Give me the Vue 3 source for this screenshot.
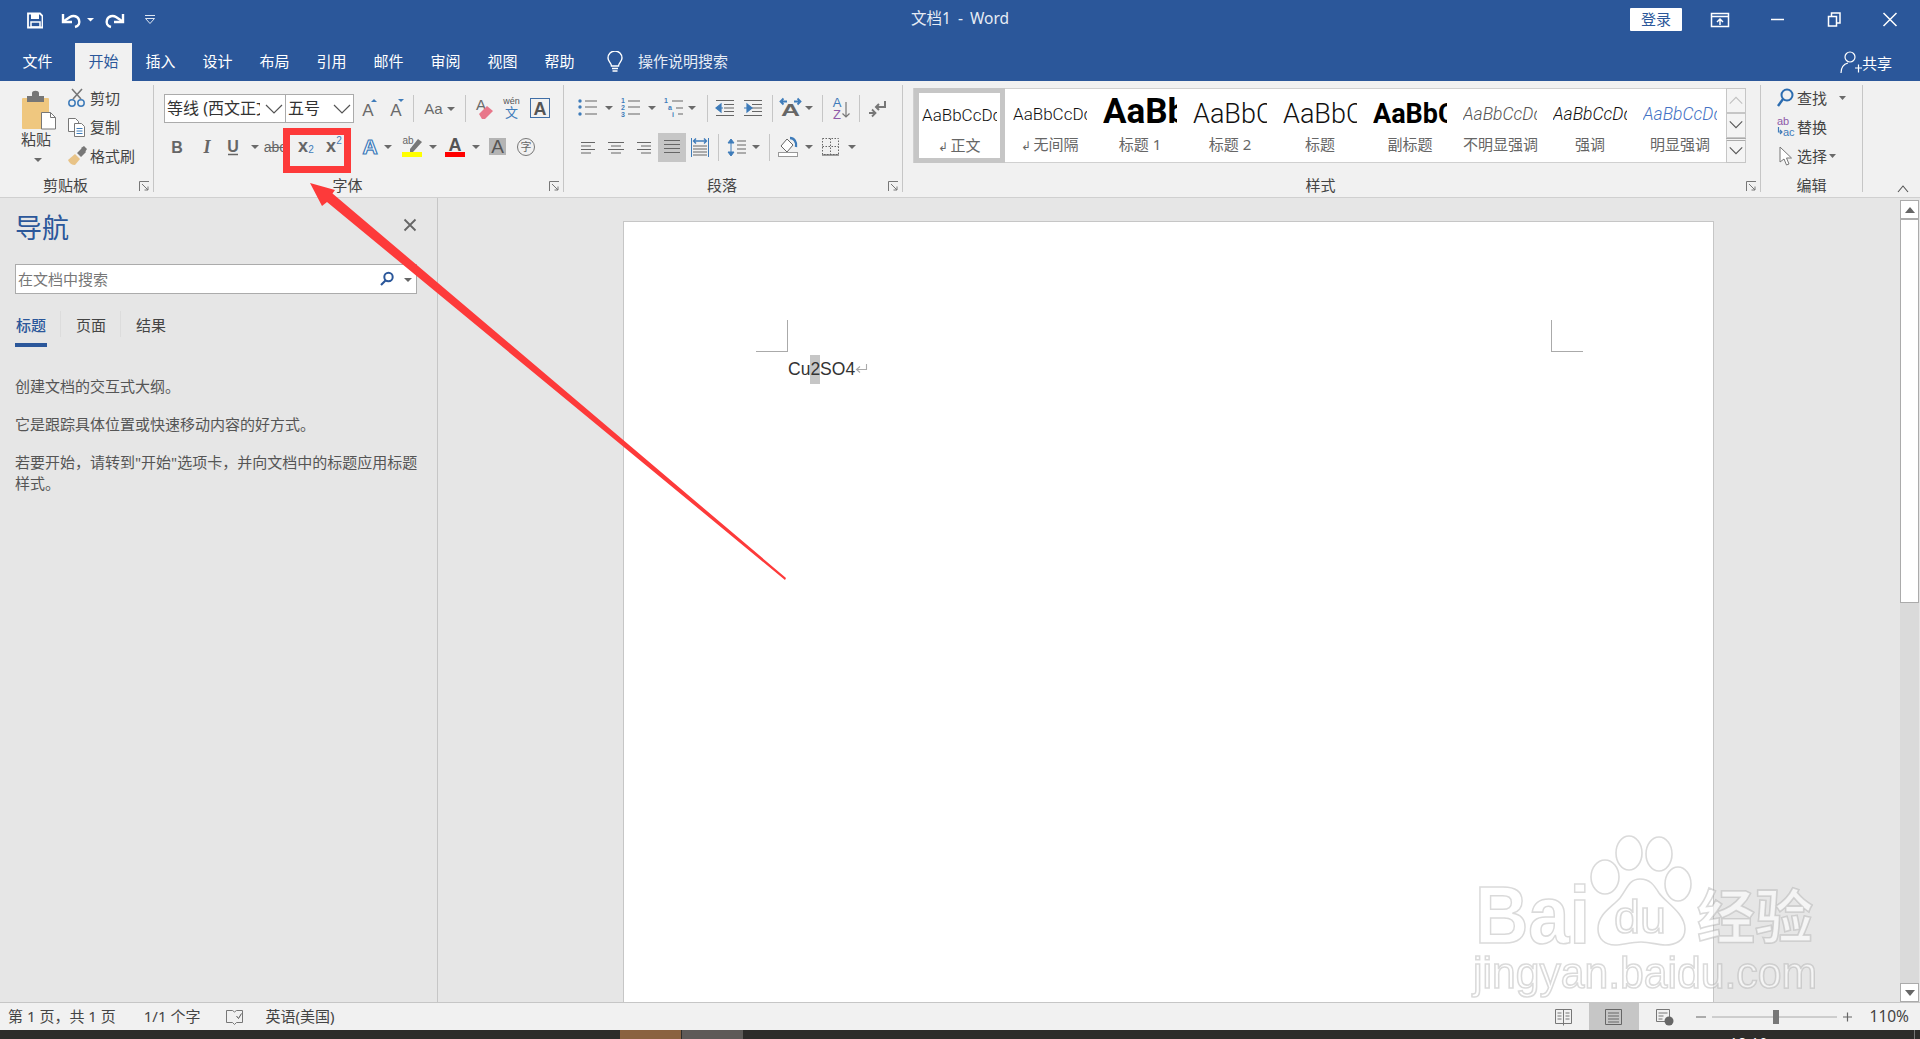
<template>
  <div class="app">
    <!-- title bar -->
    <header class="titlebar">
      <div class="qat">
        <svg width="43" height="38" viewBox="0 0 43 38">
          <path d="M28 13.5h12l2.5 2.5v11.5h-14.500z" fill="none" stroke="#fff" stroke-width="1.800" />
          <path d="M31 14v5h8v-5z" fill="#fff" />
          <path d="M31 27v-5h9v5z" fill="none" stroke="#fff" stroke-width="1.500" />
        </svg>
        <svg width="52" height="38" viewBox="43 0 52 38">
          <path d="M75 27c4-1 5-4 4-7-1-4-6-5-9-3l-6 4" fill="none" stroke="#fff" stroke-width="2.400" />
          <path d="M63 14v8h9" fill="none" stroke="#fff" stroke-width="2.400" />
          <path d="M87 18h7l-3.500 3.500z" fill="#fff" />
        </svg>
        <svg width="50" height="38" viewBox="95 0 50 38">
          <path d="M111 27c-4-1-5-4-4-7 1-4 6-5 9-3l6 4" fill="none" stroke="#fff" stroke-width="2.400" />
          <path d="M123 14v8h-9" fill="none" stroke="#fff" stroke-width="2.400" />
        </svg>
        <svg width="20" height="38" viewBox="0 0 20 38">
          <path d="M0 15.500h10M0.500 18.500h9l-4.500 5z" fill="none" stroke="#dfe7f2" stroke-width="1" />
        </svg>
      </div>
      <div class="doc-title">文档1  -  Word</div>
      <div class="win-ctrl">
        <button class="login">登录</button>
        <svg width="68" height="38" viewBox="0 0 68 38">
          <path d="M29.500 13.500h17v13h-17zM29.500 16.500h17" fill="none" stroke="#fff" stroke-width="1.500" />
          <path d="M38 25v-6m-3 3l3-3 3 3" fill="none" stroke="#fff" stroke-width="1.500" />
        </svg>
        <svg width="57" height="38" viewBox="0 0 57 38"><path d="M21 19.500h13" stroke="#fff" stroke-width="1.500" /></svg>
        <svg width="63" height="38" viewBox="0 0 63 38">
          <path d="M21.500 16.500h8v9.500h-8zM24.500 16v-3h8.500v10h-3.500" fill="none" stroke="#fff" stroke-width="1.500" />
        </svg>
        <svg width="50" height="38" viewBox="0 0 50 38"><path d="M13.500 13l13 13M26.500 13l-13 13" stroke="#fff" stroke-width="1.500" /></svg>
      </div>
    </header>

    <!-- ribbon tabs -->
    <nav class="tabs">
      <div v-for="t in ribbonTabs" :key="t" class="tab" :class="{ active: t === '开始' }">{{ t }}</div>
      <svg class="bulb" width="18" height="22" viewBox="0 0 18 22">
        <path d="M5.500 15c0-3-3.500-4.500-3.500-8a7 7 0 0 1 14 0c0 3.500-3.500 5-3.500 8z" fill="none" stroke="#fff" stroke-width="1.400" />
        <path d="M6 17.500h6M6.500 20h5" stroke="#fff" stroke-width="1.500" />
      </svg>
      <span class="tell">操作说明搜索</span>
      <div class="share">
        <svg width="22" height="24" viewBox="0 0 22 24">
          <circle cx="10" cy="7" r="5" fill="none" stroke="#fff" stroke-width="1.200" />
          <path d="M1 23c0-6 3-9 7-10M15 18h7M18.500 14.500v8" fill="none" stroke="#fff" stroke-width="1.200" />
        </svg>
        共享
      </div>
    </nav>

    <!-- ribbon -->
    <section class="ribbon">
      <div class="group g-clip">
        <div class="body clip-body">
          <div class="paste">
            <svg width="36" height="41" viewBox="0 0 36 41">
              <rect x="1" y="9" width="27" height="31" rx="1" fill="#efc77f" />
              <path d="M6 13v-6h5v-3c0-3 7-3 7 0v3h5v6z" fill="#767676" />
              <path d="M20.500 23.500h9l5 5v11.500h-14z" fill="#fff" stroke="#777" />
              <path d="M29.500 23.500v5h5" fill="none" stroke="#777" />
            </svg>
            <span class="paste-text">粘贴</span>
            <svg class="paste-caret" width="36" height="6" viewBox="0 0 36 6"><path d="M13 1h8l-4 4z" fill="#6a6a6a" /></svg>
          </div>
          <div class="clip-list">
            <div class="clip-row">
              <svg width="23" height="20" viewBox="0 0 23 20">
                <path d="M6 11l9-10M14 11l-9-10" stroke="#777" stroke-width="1.600" />
                <circle cx="5" cy="15" r="3.200" fill="none" stroke="#3f7cba" stroke-width="1.500" />
                <circle cx="14" cy="15" r="3.200" fill="none" stroke="#3f7cba" stroke-width="1.500" />
              </svg>剪切
            </div>
            <div class="clip-row">
              <svg width="23" height="20" viewBox="0 0 23 20">
                <path d="M1.500 1.500h7l3 3v10h-10z" fill="#fff" stroke="#777" />
                <path d="M7.500 6.500h7l3 3v10h-10z" fill="#fff" stroke="#777" />
                <path d="M9.500 11.500h6M9.500 14h6M9.500 16.500h6" stroke="#3f7cba" />
              </svg>复制
            </div>
            <div class="clip-row">
              <svg width="23" height="20" viewBox="0 0 23 20">
                <path d="M1 14l7-6 5 5-5 6c-3 0-6-2-7-5z" fill="#e8c387" />
                <path d="M10 7l5-5 4 4-5 5zM14 2l3-2 3 3-2 3" fill="#777" />
              </svg>格式刷
            </div>
          </div>
        </div>
        <div class="label">剪贴板</div>
        <svg class="launcher" width="11" height="11" viewBox="0 0 11 11"><path d="M.5 10V.5H10M3 3l6 6M9 5.500V9H5.500" fill="none" stroke="#777" /></svg>
      </div>

      <div class="group g-font">
        <div class="body">
          <div class="row first">
            <div class="combo name"><span>等线 (西文正文)</span><svg width="18" height="10" viewBox="0 0 18 10"><path d="M1 1l8 8 8-8" fill="none" stroke="#555" stroke-width="1.200" /></svg></div>
            <div class="combo size"><span>五号</span><svg width="18" height="10" viewBox="0 0 18 10"><path d="M1 1l8 8 8-8" fill="none" stroke="#555" stroke-width="1.200" /></svg></div>
            <svg width="34" height="29" viewBox="0 0 34 29">
              <text x="14" y="21.500" class="t-a">A</text>
              <path d="M17 8l3-3 3 3z" fill="#3f7cba" />
            </svg>
            <svg width="26" height="29" viewBox="0 0 26 29">
              <text x="8" y="21.500" class="t-a">A</text>
              <path d="M10 5h6l-3 3z" fill="#3f7cba" />
              <path d="M25.500 1v27" stroke="#c6c6c6" />
            </svg>
            <svg width="52" height="29" viewBox="0 0 52 29">
              <text x="19.500" y="20" class="t-aa">Aa</text>
              <path d="M33 13h8l-4 4z" fill="#6a6a6a" />
              <path d="M51.500 1v27" stroke="#c6c6c6" />
            </svg>
            <svg width="32" height="29" viewBox="0 0 32 29">
              <text x="15" y="16" class="t-small">A</text>
              <path d="M13 20l8-8 6 5-8 8h-3z" fill="#e8778a" />
            </svg>
            <svg width="26" height="29" viewBox="0 0 26 29">
              <text x="13.500" y="10" class="t-wen">wén</text>
              <text x="13.500" y="23" class="t-wenzi">文</text>
            </svg>
            <svg width="32" height="29" viewBox="0 0 32 29">
              <rect x="6.500" y="4.500" width="19" height="19" fill="none" stroke="#3f6ea6" />
              <text x="16" y="20.500" class="t-box">A</text>
            </svg>
          </div>
          <div class="row">
            <svg width="28" height="29" viewBox="0 0 28 29"><text x="13" y="20" class="t-b">B</text></svg>
            <svg width="28" height="29" viewBox="0 0 28 29"><text x="15" y="20" class="t-i">I</text></svg>
            <svg width="42" height="29" viewBox="0 0 42 29">
              <text x="13" y="18.500" class="t-b">U</text>
              <path d="M8 21.500h10" stroke="#666" stroke-width="1.500" />
              <path d="M31 12h8l-4 4z" fill="#6a6a6a" />
            </svg>
            <svg width="26" height="29" viewBox="0 0 26 29">
              <text x="13" y="19" class="t-abc">abc</text>
              <path d="M4 14.500h18" stroke="#666" />
            </svg>
            <svg width="32" height="29" viewBox="0 0 32 29">
              <text x="15" y="19" class="t-x">x</text>
              <text x="23" y="20" class="t-sub">2</text>
            </svg>
            <svg width="30" height="29" viewBox="0 0 30 29">
              <text x="11" y="19" class="t-x">x</text>
              <text x="19" y="11" class="t-sub">2</text>
            </svg>
            <svg width="48" height="29" viewBox="0 0 48 29">
              <text x="20" y="21" class="t-fx">A</text>
              <path d="M34 12h8l-4 4z" fill="#6a6a6a" />
            </svg>
            <svg width="42" height="29" viewBox="0 0 42 29">
              <text x="10" y="11" class="t-hl">ab</text>
              <path d="M12 16l8-10 4 3-9 10h-3z" fill="#777" />
              <rect x="4" y="19" width="20" height="5" fill="#ffff00" />
              <path d="M31 12h8l-4 4z" fill="#6a6a6a" />
            </svg>
            <svg width="44" height="29" viewBox="0 0 44 29">
              <text x="15" y="18" class="t-col">A</text>
              <rect x="5" y="19" width="20" height="5" fill="#ff0000" />
              <path d="M32 12h8l-4 4z" fill="#6a6a6a" />
            </svg>
            <svg width="28" height="29" viewBox="0 0 28 29">
              <rect x="5" y="5" width="17" height="17" fill="#b4b4b4" />
              <text x="13.500" y="20" class="t-shade">A</text>
            </svg>
            <svg width="28" height="29" viewBox="0 0 28 29">
              <circle cx="14" cy="14" r="8.500" fill="none" stroke="#777" />
              <text x="14" y="18" class="t-zi">字</text>
            </svg>
          </div>
        </div>
        <div class="label">字体</div>
        <svg class="launcher" width="11" height="11" viewBox="0 0 11 11"><path d="M.5 10V.5H10M3 3l6 6M9 5.500V9H5.500" fill="none" stroke="#777" /></svg>
      </div>

      <div class="group g-para">
        <div class="body">
          <div class="row first">
            <svg width="42" height="29" viewBox="0 0 42 29">
              <path d="M11 7h12M11 13h12M11 20h12" stroke="#666" stroke-width="1.200" />
              <circle cx="6" cy="7" r="1.700" fill="#3f7cba" /><circle cx="6" cy="13" r="1.700" fill="#3f7cba" /><circle cx="6" cy="20" r="1.700" fill="#3f7cba" />
              <path d="M31 12h8l-4 4z" fill="#6a6a6a" />
            </svg>
            <svg width="44" height="29" viewBox="0 0 44 29">
              <path d="M12 7h12M12 13h12M12 20h12" stroke="#666" stroke-width="1.200" />
              <text x="7" y="9" class="t-num">1</text><text x="7" y="15.500" class="t-num">2</text><text x="7" y="22.500" class="t-num">3</text>
              <path d="M32 12h8l-4 4z" fill="#6a6a6a" />
            </svg>
            <svg width="48" height="29" viewBox="0 0 48 29">
              <path d="M12 7h11M16 14h7M18 20h5" stroke="#666" stroke-width="1.200" />
              <text x="6" y="9" class="t-num">1</text><text x="10" y="16" class="t-num">a</text><text x="13" y="23" class="t-num">i</text>
              <path d="M28 12h8l-4 4z" fill="#6a6a6a" />
              <path d="M47.500 1v27" stroke="#c6c6c6" />
            </svg>
            <svg width="32" height="29" viewBox="0 0 32 29">
              <path d="M8 6.500h18M16 10.500h10M16 14h10M16 17.500h10M8 21.500h18" stroke="#666" stroke-width="1.200" />
              <path d="M9 14h6M13 10l-5 4 5 4z" fill="#3f7cba" stroke="#3f7cba" stroke-width="1.200" />
            </svg>
            <svg width="33" height="29" viewBox="0 0 33 29">
              <path d="M4 6.500h18M12 10.500h10M12 14h10M12 17.500h10M4 21.500h18" stroke="#666" stroke-width="1.200" />
              <path d="M4 14h6M7 10l5 4-5 4z" fill="#3f7cba" stroke="#3f7cba" stroke-width="1.200" />
              <path d="M32.500 1v27" stroke="#c6c6c6" />
            </svg>
            <svg width="50" height="29" viewBox="0 0 50 29">
              <text x="8" y="22" class="t-cn" textLength="19" lengthAdjust="spacingAndGlyphs">A</text>
              <path d="M9 7.500h5M10.500 4.500l-3 3 3 3M21 7.500h5M24.500 4.500l3 3-3 3" fill="none" stroke="#3f7cba" stroke-width="1.800" />
              <path d="M32 12h8l-4 4z" fill="#6a6a6a" />
              <path d="M49.500 1v27" stroke="#c6c6c6" />
            </svg>
            <svg width="37" height="29" viewBox="0 0 37 29">
              <text x="14" y="13" class="t-az1">A</text>
              <text x="14" y="25" class="t-az2">Z</text>
              <path d="M23 8v15M19.500 19.500l3.500 3.500 3.500-3.500" fill="none" stroke="#777" stroke-width="1.200" />
              <path d="M36.500 1v27" stroke="#c6c6c6" />
            </svg>
            <svg width="30" height="29" viewBox="0 0 30 29">
              <path d="M25 7v6h-9M19 10l-3 3 3 3" fill="none" stroke="#777" stroke-width="2" />
              <path d="M9 19h6M12 15.500l3.500 3.500-3.500 3.500" fill="none" stroke="#777" stroke-width="1.800" />
            </svg>
          </div>
          <div class="row">
            <svg width="27" height="29" viewBox="0 0 27 29"><path d="M7 9.500h14M7 13h10M7 16.500h14M7 20h10" stroke="#666" stroke-width="1.100" /></svg>
            <svg width="29" height="29" viewBox="0 0 29 29"><path d="M7 9.500h16M10 13h10M7 16.500h16M10 20h10" stroke="#666" stroke-width="1.100" /></svg>
            <svg width="28" height="29" viewBox="0 0 28 29"><path d="M7 9.500h14M11 13h10M7 16.500h14M11 20h10" stroke="#666" stroke-width="1.100" /></svg>
            <svg width="28" height="29" viewBox="0 0 28 29">
              <rect width="28" height="29" fill="#c6c6c6" />
              <path d="M6 7.500h16M6 11.500h16M6 15.500h16M6 19.500h16" stroke="#666" stroke-width="1.200" />
            </svg>
            <svg width="33" height="29" viewBox="0 0 33 29">
              <path d="M5.500 5v19M22.500 5v19" stroke="#3f7cba" />
              <path d="M8 8h12M10 5.500l-2.500 2.500 2.500 2.500M18 5.500l2.500 2.500-2.500 2.500" fill="none" stroke="#3f7cba" stroke-width="1.400" />
              <path d="M7 13h14M7 16h14M7 19h14M7 22h14" stroke="#666" stroke-width="1.200" />
              <path d="M32.500 1v27" stroke="#c6c6c6" />
            </svg>
            <svg width="51" height="29" viewBox="0 0 51 29">
              <path d="M12 7v15M9 10l3-4 3 4zM9 19l3 4 3-4z" fill="#3f7cba" stroke="#3f7cba" />
              <path d="M18 8h9M18 12h9M18 16h9M18 20h9" stroke="#666" stroke-width="1.100" />
              <path d="M33 12h8l-4 4z" fill="#6a6a6a" />
              <path d="M50.500 1v27" stroke="#c6c6c6" />
            </svg>
            <svg width="45" height="29" viewBox="0 0 45 29">
              <path d="M11 13l6-7 6 6-6 7z" fill="#fff" stroke="#666" />
              <path d="M20 5c4 0 7 4 6 9" fill="none" stroke="#3f7cba" stroke-width="2.400" />
              <rect x="8.500" y="19.500" width="19" height="4" fill="#fff" stroke="#999" />
              <path d="M35 12h8l-4 4z" fill="#6a6a6a" />
            </svg>
            <svg width="45" height="29" viewBox="0 0 45 29">
              <path d="M7.500 5.500h16v16h-16zM15.500 5.500v16M7.500 13.500h16" fill="none" stroke="#666" stroke-dasharray="1.500 1.500" />
              <path d="M7 22h17" stroke="#666" stroke-width="1.200" />
              <path d="M33 12h8l-4 4z" fill="#6a6a6a" />
            </svg>
          </div>
        </div>
        <div class="label">段落</div>
        <svg class="launcher" width="11" height="11" viewBox="0 0 11 11"><path d="M.5 10V.5H10M3 3l6 6M9 5.500V9H5.500" fill="none" stroke="#777" /></svg>
      </div>

      <div class="group g-styles">
        <div class="body">
          <div class="gallery">
            <div v-for="(s, i) in styleItems" :key="s.label" class="style-item" :class="{ selected: i === 0 }">
              <div class="preview" :class="s.cls">AaBbCcDd</div>
              <div class="style-label"><span v-if="s.mark" class="style-mark">↲</span>{{ s.label }}</div>
            </div>
            <div class="gallery-scroll">
              <div class="gs-btn"><svg width="16" height="10" viewBox="0 0 18 10"><path d="M2 9l7-7 7 7" fill="none" stroke="#c0c0c0" stroke-width="1.200" /></svg></div>
              <div class="gs-btn"><svg width="16" height="10" viewBox="0 0 18 10"><path d="M2 1l7 7 7-7" fill="none" stroke="#555" stroke-width="1.200" /></svg></div>
              <div class="gs-btn more"><svg width="16" height="10" viewBox="0 0 18 10"><path d="M2 1l7 7 7-7" fill="none" stroke="#555" stroke-width="1.200" /></svg></div>
            </div>
          </div>
        </div>
        <div class="label">样式</div>
        <svg class="launcher" width="11" height="11" viewBox="0 0 11 11"><path d="M.5 10V.5H10M3 3l6 6M9 5.500V9H5.500" fill="none" stroke="#777" /></svg>
      </div>

      <div class="group g-edit">
        <div class="body edit-body">
          <div class="edit-row">
            <svg width="21" height="22" viewBox="0 0 21 22">
              <circle cx="11" cy="8" r="5.500" fill="none" stroke="#2b6cb0" stroke-width="2" />
              <path d="M7 12l-5 7" stroke="#2b6cb0" stroke-width="2.400" />
            </svg>查找
            <svg width="20" height="6" viewBox="0 0 20 6"><path d="M12 1h7l-3.500 4z" fill="#6a6a6a" /></svg>
          </div>
          <div class="edit-row">
            <svg width="21" height="24" viewBox="0 0 21 24">
              <text x="1" y="10" class="t-ab">ab</text>
              <text x="7" y="21" class="t-ac">ac</text>
              <path d="M2.500 12v5h3M4 15l2 2-2 2" fill="none" stroke="#3f7cba" stroke-width="1.200" />
            </svg>替换
          </div>
          <div class="edit-row">
            <svg width="21" height="22" viewBox="0 0 21 22"><path d="M4 2v15l4-3 2.500 6 2.500-1-2.500-6h5z" fill="#fff" stroke="#777" /></svg>选择
            <svg width="10" height="6" viewBox="0 0 10 6"><path d="M2 1h7l-3.500 4z" fill="#6a6a6a" /></svg>
          </div>
        </div>
        <div class="label edit-label">编辑</div>
      </div>

      <svg class="collapse" width="12" height="8" viewBox="0 0 12 8"><path d="M1 7l5-6 5 6" fill="none" stroke="#555" stroke-width="1.100" /></svg>
    </section>

    <main class="main">
      <!-- navigation pane -->
      <aside class="nav-pane">
        <div class="nav-head">
          <h2>导航</h2>
          <svg width="14" height="14" viewBox="0 0 14 14"><path d="M1.500 1.500l11 11M12.500 1.500l-11 11" stroke="#666" stroke-width="1.800" /></svg>
        </div>
        <div class="nav-search">
          <span>在文档中搜索</span>
          <svg class="s-ico" width="16" height="16" viewBox="0 0 16 16">
            <circle cx="9.500" cy="6" r="4.200" fill="none" stroke="#2b579a" stroke-width="2" />
            <path d="M6.500 9.500l-4.500 4.500" stroke="#2b579a" stroke-width="2.200" />
          </svg>
          <svg class="s-caret" width="8" height="5" viewBox="0 0 8 5"><path d="M0 0h8l-4 4z" fill="#666" /></svg>
        </div>
        <div class="nav-tabs">
          <div class="nav-tab active">标题</div>
          <div class="nav-tab">页面</div>
          <div class="nav-tab">结果</div>
        </div>
        <div class="nav-text">
          <p>创建文档的交互式大纲。</p>
          <p>它是跟踪具体位置或快速移动内容的好方式。</p>
          <p>若要开始，请转到"开始"选项卡，并向文档中的标题应用标题<br />样式。</p>
        </div>
      </aside>

      <!-- document -->
      <div class="doc-area">
        <div class="canvas">
          <div class="page">
            <div class="crops">
              <i class="crop left"></i>
              <i class="crop right"></i>
            </div>
            <div class="doc-line">Cu<span class="sel">2</span>SO4<svg width="13" height="11" viewBox="0 0 13 11"><path d="M11.500 0v5.500h-9.500M5 2.500l-3.500 3 3.500 3" fill="none" stroke="#aaa" stroke-width="1.100" /></svg></div>
          </div>
        </div>
        <div class="vscroll">
          <div class="vs-btn"><svg width="10" height="6" viewBox="0 0 10 6"><path d="M5 0l5 6h-10z" fill="#666" /></svg></div>
          <div class="vs-thumb"></div>
          <div class="vs-track"></div>
          <div class="vs-btn"><svg width="10" height="6" viewBox="0 0 10 6"><path d="M0 0h10l-5 6z" fill="#666" /></svg></div>
        </div>
      </div>
    </main>

    <!-- status bar -->
    <footer class="status">
      <span class="st st-page">第 1 页，共 1 页</span>
      <span class="st st-words">1/1 个字</span>
      <svg class="st-proof" width="20" height="18" viewBox="0 0 20 18">
        <path d="M1.500 2.500h6l2 1.500 2-1.500h6v12h-6l-2 2-2-2h-6z" fill="none" stroke="#777" />
        <path d="M11.500 8l2 2.500 3-5" fill="none" stroke="#555" />
      </svg>
      <span class="st st-lang">英语(美国)</span>
      <div class="st-right">
        <svg width="50" height="27" viewBox="0 0 50 27">
          <path d="M16.500 6.500h16v14h-16zM24.500 6.500v16" fill="none" stroke="#777" />
          <path d="M18.500 10h4M18.500 13h4M18.500 16h4M26.500 10h4M26.500 13h4M26.500 16h4" stroke="#777" />
        </svg>
        <div class="layout-on">
          <svg width="18" height="16" viewBox="0 0 18 16">
            <path d="M.5 .5h16v15h-16z" fill="none" stroke="#666" />
            <path d="M3 4h11M3 7h11M3 10h11M3 13h11" stroke="#666" />
          </svg>
        </div>
        <svg width="50" height="27" viewBox="0 0 50 27">
          <path d="M17.500 6.500h13v12h-13z" fill="none" stroke="#777" />
          <path d="M19.500 10h9M19.500 13h5M19.500 16h4" stroke="#777" />
          <circle cx="30" cy="18" r="4.500" fill="#666" />
        </svg>
        <svg width="170" height="27" viewBox="0 0 170 27">
          <path d="M7 14h10M154 14h9M158.500 9.500v9" stroke="#666" stroke-width="1.200" />
          <path d="M23 14h125" stroke="#aaa" />
          <rect x="84" y="7" width="6" height="14" fill="#777" />
        </svg>
        <span class="st st-zoom">110%</span>
      </div>
    </footer>

    <!-- taskbar sliver -->
    <div class="taskbar">
      <i class="tb-orange"></i>
      <i class="tb-gray"></i>
      <span class="tb-time">18:10</span>
      <i class="tb-edge"></i>
    </div>

    <!-- baidu watermark -->
    <svg class="watermark" width="370" height="175" viewBox="1460 830 370 175">
      <g class="wm">
        <text x="1475" y="943" class="wm-bai" textLength="115" lengthAdjust="spacingAndGlyphs">Bai</text>
        <ellipse cx="1629" cy="853" rx="13" ry="17" />
        <ellipse cx="1659" cy="854" rx="13" ry="17" />
        <ellipse cx="1605" cy="877" rx="14" ry="17" />
        <ellipse cx="1678" cy="884" rx="13" ry="17" />
        <path d="M1640 879c10 0 14 6 19 14 6 9 26 20 26 36 0 12-10 16-20 16-8 0-14-3-24-3-11 0-18 3-26 3-10 0-17-6-17-16 0-15 13-21 22-31 7-9 9-19 20-19z" />
        <text x="1640" y="933" class="wm-du" textLength="52" lengthAdjust="spacingAndGlyphs">du</text>
        <text x="1697" y="938" class="wm-cn">经验</text>
        <text x="1473" y="988" class="wm-url" textLength="344" lengthAdjust="spacingAndGlyphs">jingyan.baidu.com</text>
      </g>
    </svg>

    <!-- red annotation over the screenshot -->
    <svg class="annotation" width="1920" height="1039" viewBox="0 0 1920 1039">
      <rect x="286.500" y="131.500" width="61" height="38" fill="none" stroke="#fd3a3a" stroke-width="7" />
      <path d="M310 183L335 190L332.500 193.500L786 578L785 580L327 202L322 206z" fill="#fd3a3a" />
    </svg>
  </div>
</template>

<script setup>
const ribbonTabs = ['文件', '开始', '插入', '设计', '布局', '引用', '邮件', '审阅', '视图', '帮助'];

const styleItems = [
  { label: '正文', cls: 'p-normal', mark: true },
  { label: '无间隔', cls: 'p-normal', mark: true },
  { label: '标题 1', cls: 'p-h1' },
  { label: '标题 2', cls: 'p-h2' },
  { label: '标题', cls: 'p-h2' },
  { label: '副标题', cls: 'p-sub' },
  { label: '不明显强调', cls: 'p-em-gray' },
  { label: '强调', cls: 'p-em' },
  { label: '明显强调', cls: 'p-em-blue' },
];
</script>

<style>
html, body { margin: 0; background: #f1f1f1; }
</style>

<style scoped>
.app {
  position: relative;
  width: 1920px;
  height: 1039px;
  overflow: hidden;
  font-family: "Noto Sans", "Noto Sans CJK SC", sans-serif;
  font-size: 15px;
  color: #444;
  background: #f1f1f1;
}
svg { display: block; flex: none; }
svg text { font-family: "Liberation Sans", sans-serif; text-anchor: middle; }

/* title bar */
.titlebar {
  height: 43px;
  background: #2b579a;
  display: grid;
  grid-template-columns: 1fr auto 1fr;
  color: #fff;
}
.qat, .win-ctrl { display: flex; height: 38px; align-items: center; }
.win-ctrl { justify-content: flex-end; }
.doc-title { line-height: 37px; white-space: pre; color: #e6ecf5; word-spacing: 3px; font-size: 15.500px; }
.login {
  width: 52px;
  height: 23px;
  border: 0;
  padding: 0;
  border-radius: 1px;
  background: #fff;
  color: #2b579a;
  font: inherit;
  line-height: 23px;
}

/* tabs */
.tabs {
  height: 38px;
  background: #2b579a;
  display: flex;
  align-items: stretch;
  padding-left: 9px;
  color: #fff;
}
.tab { width: 57px; text-align: center; line-height: 37px; }
.tab:first-child { margin-right: 9px; }
.tab.active { background: #f1f1f1; color: #2b579a; }
.bulb { align-self: center; margin-left: 18px; }
.tell { margin-left: 14px; line-height: 37px; color: #e6ecf5; }
.share {
  margin-left: auto;
  padding-right: 28px;
  display: flex;
  align-items: center;
  font-size: 15px;
}

/* ribbon */
.ribbon {
  height: 112px;
  padding-top: 4px;
  border-bottom: 1px solid #d0d0d0;
  display: flex;
  position: relative;
}
.group {
  position: relative;
  height: 107px;
  display: flex;
  flex-direction: column;
  border-right: 1px solid #c6c6c6;
  box-sizing: border-box;
}
.g-clip { width: 154px; }
.g-font { width: 410px; }
.g-para { width: 339px; }
.g-styles { width: 858px; }
.g-edit { width: 102px; }
.body { flex: 1; min-height: 0; }
.label {
  height: 14px;
  line-height: 14px;
  padding-right: 22px;
  text-align: center;
}
.edit-label { padding-right: 0; }
.launcher { position: absolute; right: 3px; bottom: 0; }

.clip-body { display: flex; }
.paste { width: 67px; padding: 4px 0 0 21px; box-sizing: border-box; }
.paste-text { display: block; width: 32px; line-height: 20px; margin-top: -1px; white-space: nowrap; }
.paste-caret { margin-top: 8px; }
.clip-list { margin-top: -2px; }
.clip-row { height: 29px; display: flex; align-items: center; }

.g-font .body { padding-left: 10px; }
.g-para .body { padding-left: 10px; }
.row { display: flex; height: 29px; margin-top: 10px; }
.row.first { margin-top: 9px; }

.combo {
  height: 29px;
  box-sizing: border-box;
  border: 1px solid #ababab;
  background: #fff;
  display: flex;
  align-items: center;
  font-size: 16px;
  color: #333;
}
.combo span { overflow: hidden; white-space: nowrap; padding-left: 2px; margin-bottom: 3px; }
.combo svg { margin-left: auto; margin-right: 2px; }
.combo.name { width: 122px; }
.combo.name span { width: 93px; }
.combo.size { width: 69px; margin-left: -1px; }

/* icon letters */
.t-a { font-size: 17px; fill: #6a6a6a; }
.t-aa { font-size: 15px; fill: #6a6a6a; }
.t-small { font-size: 15px; fill: #6a6a6a; }
.t-wen { font-size: 9px; fill: #555; }
.t-wenzi { font-family: "Noto Sans CJK SC", sans-serif; font-size: 13px; fill: #3f7cba; }
.t-box { font-size: 18px; font-weight: 700; fill: #555; }
.t-b { font-size: 16px; font-weight: 700; fill: #666; }
.t-i { font-family: "Liberation Serif", serif; font-size: 18px; font-weight: 700; font-style: italic; fill: #666; }
.t-abc { font-size: 14px; fill: #666; }
.t-x { font-size: 18px; font-weight: 700; fill: #666; }
.t-sub { font-size: 10px; fill: #3f7cba; }
.t-fx { font-size: 21px; font-weight: 700; fill: #fff; stroke: #3f7cba; stroke-width: 1.200; }
.t-hl { font-size: 10px; fill: #666; }
.t-col { font-size: 18px; fill: #555; font-weight: 700; }
.t-shade { font-size: 19px; fill: #555; }
.t-zi { font-family: "Noto Sans CJK SC", sans-serif; font-size: 11px; fill: #666; }
.t-num { font-size: 7px; font-weight: 700; fill: #3f7cba; }
.t-cn { font-size: 17px; font-weight: 700; fill: #666; text-anchor: start; }
.t-az1 { font-size: 13px; fill: #3f7cba; }
.t-az2 { font-size: 13px; fill: #8e5aa8; }
.t-ab { font-size: 11px; fill: #8e5aa8; text-anchor: start; }
.t-ac { font-size: 11px; fill: #3f7cba; text-anchor: start; }

/* style gallery */
.g-styles .body { padding: 3px 14px 0 10px; }
.gallery {
  height: 75px;
  display: flex;
  background: #fff;
  box-sizing: border-box;
  border: 1.5px solid #d0d0d0;
  border-right: 0;
}
.style-item {
  width: 90px;
  box-sizing: border-box;
  padding: 0 8px;
  flex: none;
  overflow: hidden;
}
.style-item.selected {
  width: 91px;
  border: 5px solid #c6c6c6;
  padding: 0 3px;
  margin: -1.500px 0;
  height: 75px;
}
.selected .preview { margin-top: -3px; }
.preview {
  height: 44px;
  line-height: 50px;
  overflow: hidden;
  white-space: nowrap;
  font-family: Roboto, sans-serif;
  color: #111;
}
.p-normal { font-size: 17px; font-weight: 300; }
.p-h1 { font-size: 35px; font-weight: 700; color: #000; line-height: 46px; }
.p-h2 { font-size: 27px; font-weight: 300; }
.p-sub { font-size: 27px; font-weight: 700; color: #000; }
.p-em-gray, .p-em, .p-em-blue { font-size: 17.500px; font-weight: 300; font-style: italic; }
.p-em-gray { color: #555; }
.p-em-blue { color: #4472c4; }
.style-label {
  line-height: 22px;
  text-align: center;
  white-space: nowrap;
  color: #666;
  font-size: 15px;
}
.style-mark { font-size: 12px; margin-right: 2px; }
.gallery-scroll { width: 20px; margin: -1.500px 0 -1.500px auto; flex: none; }
.gs-btn {
  height: 25px;
  box-sizing: border-box;
  border: 1px solid #c6c6c6;
  background: #f4f4f4;
  display: flex;
  align-items: center;
  justify-content: center;
  margin-bottom: 0;
}
.gs-btn.more { border-top: 3px double #aaa; }

/* editing */
.edit-body { padding-left: 15px; margin-top: -2px; }
.edit-row { height: 29px; display: flex; align-items: center; }
.collapse { position: absolute; right: 11px; bottom: 4px; }

/* main area */
.main { height: 804px; display: flex; }
.nav-pane {
  width: 438px;
  box-sizing: border-box;
  flex: none;
  padding: 12px 20px 0 15px;
  background: #e6e6e6;
  border-right: 1px solid #c6c6c6;
}
.nav-head { display: flex; justify-content: space-between; align-items: center; height: 36px; }
.nav-head h2 { margin: 0; font-size: 27px; font-weight: 400; color: #2b579a; line-height: 36px; }
.nav-head svg { margin-bottom: 6px; margin-right: 0; }
.nav-search {
  margin-top: 18px;
  height: 30px;
  box-sizing: border-box;
  border: 1px solid #ababab;
  background: #fff;
  display: flex;
  align-items: center;
  padding-left: 2px;
  color: #777;
}
.nav-search span { margin-bottom: 2px; }
.s-ico { margin-left: auto; }
.s-caret { margin: 2px 4px 0 9px; }
.nav-tabs { display: flex; margin-top: 16px; }
.nav-tab {
  position: relative;
  width: 32px;
  margin-right: 28px;
  height: 37px;
  box-sizing: border-box;
  line-height: 30px;
  text-align: center;
}
.nav-tab.active { color: #2b579a; font-weight: 500; border-bottom: 4px solid #2b579a; }
.nav-tab:not(:last-child)::after {
  content: "";
  position: absolute;
  right: -14px;
  top: 1px;
  height: 26px;
  width: 1px;
  background: #dcdcdc;
}
.nav-text { margin-top: 29px; color: #555; line-height: 21px; white-space: nowrap; }
.nav-text p { margin: 0 0 17px; }

/* document */
.doc-area { flex: 1; display: flex; background: #e6e6e6; min-width: 0; }
.canvas { flex: 1; overflow: hidden; padding: 23px 0 0 185px; min-width: 0; }
.page {
  width: 1091px;
  height: 900px;
  box-sizing: border-box;
  background: #fff;
  border: 1px solid #c6c6c6;
  border-bottom: 0;
}
.crops {
  display: flex;
  justify-content: space-between;
  padding: 98px 130px 0 132px;
}
.crop { display: block; width: 32px; height: 32px; box-sizing: border-box; border-bottom: 1px solid #aaa; }
.crop.left { border-right: 1px solid #aaa; }
.crop.right { border-left: 1px solid #aaa; }
.doc-line {
  margin-top: 3px;
  padding-left: 164px;
  display: flex;
  align-items: center;
  height: 29px;
  font-family: "Liberation Sans", sans-serif;
  font-size: 17.500px;
  color: #333;
}
.sel { background: #c6c6c6; line-height: 29px; }
.doc-line svg { margin: 0; }

.vscroll { width: 19px; margin-right: 1px; display: flex; flex-direction: column; padding-top: 2px; flex: none; }
.vs-btn {
  height: 19px;
  box-sizing: border-box;
  background: #fff;
  border: 1px solid #ababab;
  display: flex;
  align-items: center;
  justify-content: center;
  flex: none;
}
.vs-thumb { height: 384px; box-sizing: border-box; background: #fff; border: 1px solid #ababab; flex: none; }
.vs-track { flex: 1; background: #dadada; }

/* status bar */
.status {
  height: 28px;
  box-sizing: border-box;
  border-top: 1px solid #c6c6c6;
  background: #f1f1f1;
  display: flex;
  align-items: center;
  white-space: nowrap;
}
.st { margin-bottom: 2px; }
.st-page { margin-left: 8px; }
.st-words { margin-left: 28px; }
.st-proof { margin-left: 25px; }
.st-lang { margin-left: 20px; }
.st-right { margin-left: auto; padding-right: 11px; display: flex; align-items: center; }
.layout-on { width: 50px; height: 27px; background: #c6c6c6; display: flex; align-items: center; justify-content: center; }
.st-zoom { margin-left: 11px; font-size: 15.500px; }

/* taskbar */
.taskbar { height: 9px; background: #2e2c2a; display: flex; overflow: hidden; position: relative; }
.tb-orange { width: 61px; margin-left: 620px; background: #8a6240; }
.tb-gray { width: 61px; margin-left: 1px; background: #5e5a58; }
.tb-time { margin-left: 987px; padding-top: 5px; color: #fff; font-size: 13px; line-height: 15px; letter-spacing: 1px; }
.tb-edge { width: 1px; margin-left: 146px; background: #777; }

/* overlays */
.watermark { position: absolute; left: 1460px; top: 830px; pointer-events: none; filter: blur(0.4px); }
.wm { fill: rgba(255, 255, 255, 0.6); stroke: rgba(150, 150, 150, 0.35); stroke-width: 1.600; }
.wm-bai { font-size: 82px; font-weight: 700; text-anchor: start; }
.wm-du { font-size: 46px; text-anchor: middle; }
.wm-cn { font-family: "Noto Sans CJK SC", sans-serif; font-size: 58px; font-weight: 700; text-anchor: start; }
.wm-url { font-size: 44px; text-anchor: start; }
.annotation { position: absolute; left: 0; top: 0; pointer-events: none; }
</style>
